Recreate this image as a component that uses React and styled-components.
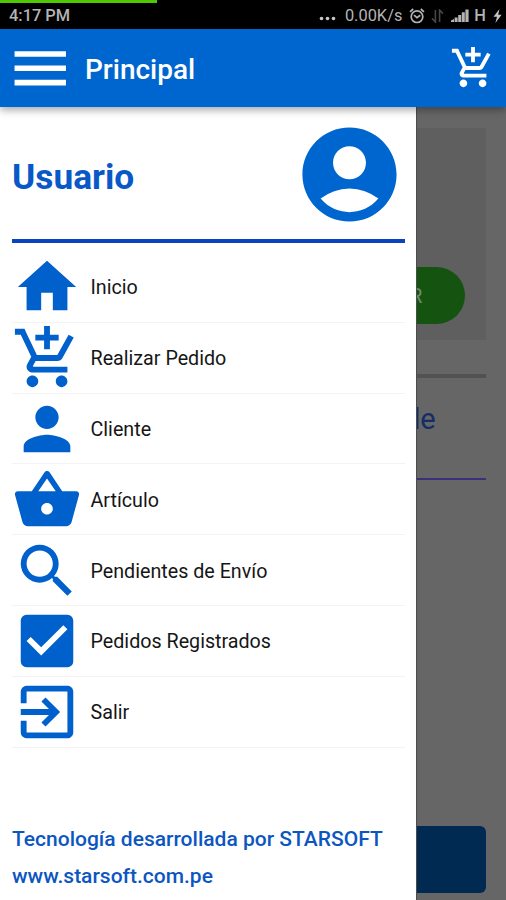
import React from 'react';
import styled, { createGlobalStyle } from 'styled-components';
import {
  MdAccountCircle,
  MdAddShoppingCart,
  MdCheckBox,
  MdExitToApp,
  MdHome,
  MdMenu,
  MdPerson,
  MdSearch,
  MdShoppingBasket,
} from 'react-icons/md';

const GlobalStyle = createGlobalStyle`
  * {
    box-sizing: border-box;
  }

  body {
    margin: 0;
    font-family: Roboto, 'Liberation Sans', sans-serif;
    background: #fff;
  }

  svg {
    display: block;
    flex: none;
  }
`;

const Screen = styled.div`
  display: flex;
  flex-direction: column;
  width: 506px;
  height: 900px;
  overflow: hidden;
`;

// Status bar //
const StatusBar = styled.div`
  flex: none;
  height: 28.5px;
  background: #000;
`;

const Progress = styled.div`
  width: 157px;
  height: 3px;
  background: #4fc802;
`;

const StatusRow = styled.div`
  display: flex;
  align-items: center;
  height: 25px;
  padding: 0 4px 0 9px;
  color: #b4b4b4;
`;

const StatusText = styled.span`
  font-size: 16.4px;
  font-weight: ${(props) => props.$weight || 500};
  line-height: 25px;
  white-space: nowrap;
  margin-left: ${(props) => props.$left || 0}px;
`;

const StatusIcon = styled.svg`
  margin-left: ${(props) => props.$left}px;
`;

const Push = styled.div`
  flex: 1;
`;

// App bar //
const AppBar = styled.header`
  position: relative;
  z-index: 1;
  flex: none;
  display: flex;
  align-items: center;
  height: 78.5px;
  padding: 0 10px 0 5.5px;
  background: #0066cf;
  color: #fff;
  box-shadow: 0 3px 8px rgba(0, 0, 0, 0.35);
`;

const AppTitle = styled.h1`
  flex: 1;
  margin: 4px 0 0 11px;
  font-size: 28px;
  font-weight: 500;
  line-height: 34px;
`;

// Drawer //
const Body = styled.div`
  flex: 1;
  display: flex;
  min-height: 0;
`;

const Drawer = styled.aside`
  flex: none;
  display: flex;
  flex-direction: column;
  width: 417px;
  padding: 0 11px 5px 12px;
  background: #fff;
  border-right: 1px solid #4c4c4c;
`;

const UserHeader = styled.div`
  display: flex;
  align-items: center;
  justify-content: space-between;
  height: 136.3px;
  border-bottom: 4px solid #0844bd;
`;

const UserName = styled.h2`
  margin: 8px 0 0;
  font-size: 35.3px;
  font-weight: 700;
  line-height: 40px;
  color: #0858c8;
`;

const Avatar = styled(MdAccountCircle)`
  margin: 3px -1px 0 0;
  color: #0066cf;
`;

const Menu = styled.ul`
  margin: 8.7px 0 0;
  padding: 0;
  list-style: none;
`;

const MenuItem = styled.li`
  display: flex;
  align-items: center;
  height: 70.8px;
  padding-top: 1px;
  border-bottom: 1px solid #f3f3f3;
  color: #0060cc;
`;

const MenuLabel = styled.span`
  padding-top: 2px;
  margin-left: 8.5px;
  font-size: 19.7px;
  line-height: 24px;
  color: #161616;
`;

const Footer = styled.footer`
  margin-top: auto;
  font-size: 21px;
  font-weight: 500;
  line-height: 37px;
  color: #0c56c2;
  white-space: nowrap;

  p {
    margin: 0;
  }
`;

// Page behind the drawer //
const Dimmed = styled.main`
  flex: 1;
  display: flex;
  flex-direction: column;
  min-width: 0;
  padding: 21px 20.5px 7px 0;
  background: #666;
`;

const Card = styled.div`
  flex: none;
  height: 212px;
  padding-top: 139px;
  background: #5f5f5f;
`;

const GreenButton = styled.div`
  display: flex;
  align-items: center;
  width: 47.5px;
  height: 57px;
  border-radius: 0 28.5px 28.5px 0;
  background: #155410;
  color: #6f8d6c;
  font-size: 20px;
  overflow: hidden;

  span {
    margin-left: -7px;
  }
`;

const Rule = styled.div`
  flex: none;
  height: ${(props) => props.$size}px;
  background: ${(props) => props.$color};
`;

const Detail = styled.div`
  flex: none;
  height: 99.5px;
  padding-top: 23px;
  font-size: 29px;
  line-height: 36px;
  color: #132d66;
  overflow: hidden;

  span {
    margin-left: -13px;
  }
`;

const BlueButton = styled.div`
  flex: none;
  height: 67.5px;
  margin-top: auto;
  border-radius: 0 6px 6px 0;
  background: #002a52;
`;

const items = [
  { label: 'Inicio', icon: MdHome },
  { label: 'Realizar Pedido', icon: MdAddShoppingCart },
  { label: 'Cliente', icon: MdPerson },
  { label: 'Artículo', icon: MdShoppingBasket },
  { label: 'Pendientes de Envío', icon: MdSearch },
  { label: 'Pedidos Registrados', icon: MdCheckBox },
  { label: 'Salir', icon: MdExitToApp },
];

function Status() {
  return (
    <StatusBar>
      <Progress />
      <StatusRow>
        <StatusText>4:17 PM</StatusText>
        <Push />
        <StatusIcon width='18' height='12' viewBox='0 0 18 12' fill='#c8c8c8' $left={0}>
          <circle cx='2.5' cy='8.5' r='1.8' />
          <circle cx='8.5' cy='8.5' r='1.8' />
          <circle cx='14.5' cy='8.5' r='1.8' />
        </StatusIcon>
        <StatusText $left={8} $weight={400}>0.00K/s</StatusText>
        <StatusIcon width='16' height='16' viewBox='0 0 16 16' fill='none' stroke='#b4b4b4' strokeWidth='1.7' $left={7}>
          <circle cx='8' cy='8.7' r='5.8' />
          <path d='M1 3.8 4.2 1M15 3.8 11.8 1M5 7.2 8 9.6 11.2 7.2' />
        </StatusIcon>
        <StatusIcon width='13' height='14' viewBox='0 0 13 14' fill='none' stroke='#464646' strokeWidth='1.6' $left={6}>
          <path d='M4.4 1V13L1 9.4M8.6 13V1L12 4.6' />
        </StatusIcon>
        <StatusIcon width='18' height='13' viewBox='0 0 18 13' fill='#b4b4b4' $left={7}>
          <path d='M0 13V11.5L3 10V13ZM3.6 13V8.5H6.6V13ZM7.2 13V6H10.2V13ZM10.8 13V3.2H13.8V13ZM14.4 13V.5H17.6V13Z' />
        </StatusIcon>
        <StatusText $left={5}>H</StatusText>
        <StatusIcon width='9' height='14' viewBox='0 0 9 14' fill='#c4c4c4' $left={7}>
          <path d='M6.5 0 .5 7.8H4L2.4 14 8.6 5.8H5.2Z' />
        </StatusIcon>
      </StatusRow>
    </StatusBar>
  );
}

function App() {
  return (
    <Screen>
      <GlobalStyle />
      <Status />
      <AppBar>
        <MdMenu size={68.5} />
        <AppTitle>Principal</AppTitle>
        <MdAddShoppingCart size={46} />
      </AppBar>
      <Body>
        <Drawer>
          <UserHeader>
            <UserName>Usuario</UserName>
            <Avatar size={113} />
          </UserHeader>
          <Menu>
            {items.map(({ label, icon: Icon }) => (
              <MenuItem key={label}>
                <Icon size={70} />
                <MenuLabel>{label}</MenuLabel>
              </MenuItem>
            ))}
          </Menu>
          <Footer>
            <p>Tecnología desarrollada por STARSOFT</p>
            <p>www.starsoft.com.pe</p>
          </Footer>
        </Drawer>
        <Dimmed>
          <Card>
            <GreenButton>
              <span>R</span>
            </GreenButton>
          </Card>
          <Rule $size={34} $color='transparent' />
          <Rule $size={4} $color='#525252' />
          <Detail>
            <span>de</span>
          </Detail>
          <Rule $size={2} $color='#39317a' />
          <BlueButton />
        </Dimmed>
      </Body>
    </Screen>
  );
}

export default App;
